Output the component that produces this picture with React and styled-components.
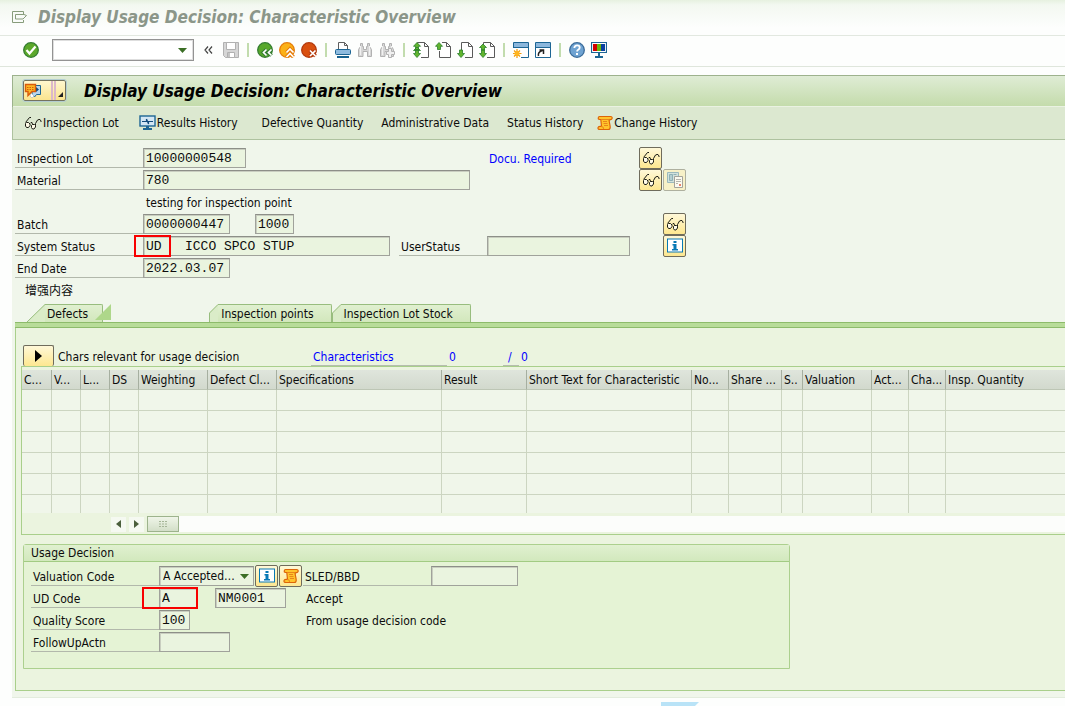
import React, { useState } from "react";
import styled, { createGlobalStyle, css } from "styled-components";

const GlobalStyle = createGlobalStyle`
  * {
    box-sizing: border-box;
  }

  body {
    margin: 0;
    background: #fdfefd;
    color: #0c0c0c;
    font-family: "DejaVu Sans Condensed", "DejaVu Sans", "Noto Sans CJK SC", sans-serif;
    font-size: 12px;
    line-height: 16px;
  }

  button, input, select {
    font: inherit;
    color: inherit;
    margin: 0;
    padding: 0;
    border: 0;
    border-radius: 0;
    background: none;
    outline: none;
  }

  svg {
    display: block;
    flex: none;
  }
`;

/* ---------- icons ---------- */

const Glasses = () => (
  <svg width="18" height="16" viewBox="0 0 18 16" fill="none" stroke="#1c1c14">
    <path d="M7 2.500H5.500L1.500 7.500" />
    <path d="M2.500 7.500h2l1.500 1.500v1.500l-1.500 2h-2l-1-1.500V8.500z" fill="#fffbe8" />
    <path d="M8.500 9.500h2l1 1v1.500l-1.500 2H8.500l-1-1.500v-2z" fill="#fffbe8" />
    <path d="M6 8.500l1-1h1l.5 2M11.500 10.500V8.500l2-3.500 1.500-.5h1l1 1.500v1" />
  </svg>
);

const Monitor = () => (
  <svg width="17" height="16" viewBox="0 0 17 16">
    <rect x="1" y="1" width="15" height="10" fill="#d3e6f4" stroke="#1d6594" strokeWidth="1.4" />
    <path d="M3 6.500h4.500V4M7.500 4l2 5V6.500H14" fill="none" stroke="#124b7c" strokeWidth="1.2" />
    <path d="M7 11h3v2h3v2H4v-2h3z" fill="#1d6594" />
  </svg>
);

const Scroll = () => (
  <svg width="16" height="16" viewBox="0 0 16 16">
    <path
      d="M2.5 1.5h11q2 0 1.6 2-.5 1.300-2 1l-1 1 1 5.500q.6 3.500-2 3.500H3q-2.400 0-2-1.800.3-1.400 2-1.400h1.500L3.800 4.500H2.500q-1.500-.3-1.300-1.500.2-1.500 1.300-1.500z"
      fill="#ffc42b"
      stroke="#dc6508"
      strokeWidth="1.2"
    />
    <path d="M4 4.500h8M6 6.500h4M6.500 8.500h4M7 10.500h4M4 11.500q3 0 2.500 2.500" fill="none" stroke="#e8861a" />
  </svg>
);

const Info = () => (
  <svg width="16" height="16" viewBox="0 0 16 16">
    <rect x=".5" y="1" width="15" height="13" fill="#fff" stroke="#0879b5" />
    <path d="M6.500 3h3v2h-3zM5.500 6h4v5h1.500v1.500H5V11h1.500V7.500h-1z" fill="#0879b5" />
  </svg>
);

const Documents = () => (
  <svg width="16" height="16" viewBox="0 0 16 16">
    <path d="M.5 .5h11v10H.5z" fill="#d2e2dc" stroke="#9bb9bd" />
    <path d="M2.500 2.500h3v6h-3zM6.500 2.500h3" fill="#b4cfd0" stroke="#8fb0b5" />
    <path d="M7.500 4.500h8v11h-8z" fill="#fbfaf0" stroke="#a3a39b" />
    <path d="M9 7.500h5M9 9.500h5M9 11.500h2" stroke="#b5b5ad" />
    <path d="M12 12h2v2h-2z" fill="#e8836b" />
  </svg>
);

const Speech = () => (
  <svg width="18" height="16" viewBox="0 0 18 16">
    <path d="M8.500 2.500h8v9h-4l-2 2.500-2.500-2.500z" fill="#b5d6ee" stroke="#1d6594" />
    <path d="M12 4l3 2.500L12 9z" fill="#124b7c" />
    <path d="M7 10l3 3-2 2-2-2z" fill="#fff" stroke="#a8b3ba" strokeWidth=".6" />
    <path d="M1.500 1.500h10v7H8l-4 4v-4H1.500z" fill="#fcb723" stroke="#d95b0b" strokeWidth="1.400" />
    <path d="M3 4.500h7M3 6.500h7" stroke="#d95b0b" strokeDasharray="1.500 1" />
  </svg>
);

const ExitTree = () => (
  <svg width="16" height="12" viewBox="0 0 16 12" fill="none" stroke="#879c7b">
    <path d="M11.500 3V.5H.5v11h11V9M3.500 3.500h8.500l2.500 1-3.500 3.500H3.500z" />
  </svg>
);

const Check = () => (
  <svg width="16" height="16" viewBox="0 0 16 16">
    <circle cx="8" cy="8" r="7.300" fill="#5ca82b" stroke="#347d31" strokeWidth="1.300" />
    <path d="M3.500 8l3 3.500 6-7" fill="none" stroke="#fff" strokeWidth="2.200" />
  </svg>
);

const Save = () => (
  <svg width="16" height="16" viewBox="0 0 16 16" stroke="#b1b1b1">
    <path d="M.5 .5h15v15H2.500l-2-2z" fill="#d6d6d6" />
    <path d="M3.500 .5h9v7h-9z" fill="#fff" />
    <path d="M4.500 10.500h7v5h-7z" fill="#fff" />
    <path d="M5 11h2v4H5z" fill="#c4c4c4" stroke="none" />
  </svg>
);

// round button with a small double chevron or a cross in the lower right corner
const Round = ({ fill, stroke, mark }) => (
  <svg width="17" height="16" viewBox="0 0 17 16" fill="none">
    <circle cx="8" cy="8" r="7.300" fill={fill} stroke={stroke} strokeWidth="1.300" />
    <path d={mark} stroke={stroke} strokeWidth="3.800" />
    <path d={mark} stroke="#fff" strokeWidth="1.700" />
  </svg>
);

const Printer = () => (
  <svg width="16" height="16" viewBox="0 0 16 16">
    <path d="M3.500 8V.5h6l3 3V8M9.500 .5v3h3" fill="#fff" stroke="#5e5e5e" />
    <rect x=".5" y="7.500" width="15" height="5" rx="1" fill="#8dbade" stroke="#1d6594" />
    <path d="M2 14h12v2H2z" fill="#17618f" />
  </svg>
);

const Binoculars = ({ plus }) => (
  <svg width="16" height="16" viewBox="0 0 16 16">
    <path
      d="M3.500 1.500h2v3h1v3h3v-3h1v-3h2v3l2 3v7h-4v-5H6v5H1.500v-7l2-3z"
      fill="#d7d7d7"
      stroke="#b2b2b2"
    />
    <path d="M3.500 4v9M12.500 4v9" stroke="#f1f1f1" />
    {plus && <path d="M9.500 6.500h3v3h3v3h-3v3h-3v-3h-2v-3h2z" fill="#f0f0f0" stroke="#b2b2b2" />}
  </svg>
);

// page sheet with green arrows that tell the scroll direction
const PageIcon = ({ arrows, right }) => (
  <svg width="16" height="16" viewBox="0 0 16 16">
    <path
      d={right ? "M4.500 9v6.500h11v-11l-4-4H7M11.500 .5v4h4" : "M4.500 8V.5h7l4 4v11H8M11.500 .5v4h4"}
      fill="#fff"
      stroke="#5a5a5a"
    />
    <path d={arrows} fill="#62b52e" stroke="#28802a" strokeWidth=".8" />
  </svg>
);

const upTop = "M4 .5l3.500 3.800H5.500V7.500h-3V4.300H.5z";
const upLow = "M4 5l3.500 3.500H.5z";
const downLow = "M4 15.500l3.500-4H5.500V8h-3v3.500H.5z";

const SessionIcon = ({ shortcut }) => (
  <svg width="16" height="16" viewBox="0 0 16 16">
    <path d="M.5 .5h15v15H.5z" fill="#fff" stroke="#1d6594" />
    <path d="M1 1h14v4H1z" fill="#8cb7dc" />
    <path d="M0 5.500h16" stroke="#1d6594" />
    {shortcut ? (
      <path d="M3.500 14q-1-4 4-5.500M4.500 8h4v4" fill="none" stroke="#222" strokeWidth="1.500" />
    ) : (
      <>
        <path d="M0 6h8v10H0z" fill="#fff" />
        <path d="M4 7v9M0 11.500h8.500M1 8.500l6 6M7 8.500l-6 6" stroke="#f29a0a" strokeWidth="1.200" />
        <circle cx="4" cy="11.500" r="2.500" fill="#ffb51f" />
      </>
    )}
  </svg>
);

const Help = () => (
  <svg width="16" height="16" viewBox="0 0 16 16">
    <circle cx="8" cy="8" r="7.300" fill="#6fa3d2" stroke="#3a6b99" strokeWidth="1.300" />
    <path d="M5.300 6q.2-2.700 2.800-2.700 2.600 0 2.600 2.200 0 1.400-1.500 2.200-1.100.6-1.100 1.800" fill="none" stroke="#fff" strokeWidth="1.800" />
    <path d="M7 11h2v2H7z" fill="#fff" />
  </svg>
);

const Layout = () => (
  <svg width="16" height="16" viewBox="0 0 16 16">
    <path d="M.5 .5h15v10H.5z" fill="#fff" stroke="#1d6594" strokeWidth="1.200" />
    <path d="M2 2h4v7H2z" fill="#d40000" />
    <path d="M6 2h4v7H6z" fill="#6cb80b" />
    <path d="M10 2h4v7h-4z" fill="#0a3fa0" />
    <path d="M7 11h2v3h3v2H4v-2h3z" fill="#1d6594" />
  </svg>
);

const Triangle = ({ d = "M0 0h9L4.500 5z", w = 9, h = 5, fill = "#3b6e25" }) => (
  <svg width={w} height={h} viewBox={`0 0 ${w} ${h}`}>
    <path d={d} fill={fill} />
  </svg>
);

/* ---------- page ---------- */

const Page = styled.div`
  height: 100vh;
  overflow: hidden;
`;

const TitleBar = styled.header`
  display: flex;
  align-items: center;
  gap: 10px;
  height: 36px;
  padding: 0 12px 2px;
  border-bottom: 1px solid #e2e8e0;
  background: linear-gradient(#e6f1e0, #f3f8f1 5px, #fdfefd 28px);
  color: #8b9689;
`;

const Title = styled.h1`
  margin: 0;
  font-size: 17px;
  line-height: 20px;
  font-weight: bold;
  font-style: italic;
  white-space: nowrap;
`;

const Toolbar = styled.nav`
  display: flex;
  align-items: center;
  gap: 6px;
  height: 31px;
  padding: 0 23px 2px;
  border-bottom: 1px solid #dfe6dc;
`;

const ToolButton = styled.button`
  display: flex;
  width: 16px;
  height: 16px;
`;

const Separator = styled.span`
  width: 2px;
  height: 14px;
  margin: 0 2px;
  background: #c2dcae;
`;

const CommandBox = styled.div`
  display: flex;
  align-items: center;
  width: 142px;
  height: 22px;
  margin-left: 7px;
  padding: 0 6px;
  border: 1px solid #939393;
  box-shadow: inset 0 0 0 1px #dedede;
  background: #fff;

  input {
    flex: 1;
    min-width: 0;
  }
`;

const Collapse = styled(ToolButton)`
  align-items: center;
  justify-content: center;
  width: 17px;
`;

const Window = styled.main`
  margin: 8px 0 0 12px;
  border: solid #e3ecdd;
  border-width: 0 0 1px;
  background: #f0f6eb;
`;

const WindowHeader = styled.div`
  display: flex;
  align-items: center;
  gap: 18px;
  height: 32px;
  padding: 0 10px 2px;
  border: solid #9db28d;
  border-width: 1px 0 0 1px;
  box-shadow: inset 0 -1px 0 #eaf2e2;
  background: linear-gradient(#dfecd5, #c3dbaa);
  color: #000;
`;

const ServiceButton = styled.button`
  display: flex;
  width: 43px;
  height: 21px;
  align-items: center;
  border: 1px solid #74735f;
  border-radius: 2px;
  outline: 1px solid #b3cdd0;
  background: linear-gradient(#fff7cf, #fbe48e);

  span {
    display: flex;
    align-items: flex-end;
    justify-content: flex-end;
    flex: 1;
    height: 19px;
    margin-left: 9px;
    padding: 0 2px 3px 0;
    border-left: 5px double #dcb8c9;
  }
`;

const AppToolbar = styled.div`
  display: flex;
  height: 33px;
  padding-left: 6px;
  border: solid #aec29f;
  border-width: 0 0 1px 1px;
  background: #dce8d0;
`;

const AppButton = styled.button`
  display: flex;
  align-items: center;
  gap: 1px;
  padding: ${(p) => (p.$icon ? "0 15px 0 5px" : "0 9px")};
  white-space: nowrap;
`;

/* ---------- form parts ---------- */

const Form = styled.section`
  padding: 7px 0 3px 3px;
`;

const Row = styled.div`
  display: flex;
  align-items: center;
  position: relative;
  height: 22px;
`;

const Fields = styled.div`
  display: flex;
  align-items: center;
  width: 624px;
`;

const Label = styled.label`
  width: ${(p) => p.$width}px;
  height: 20px;
  margin-left: ${(p) => p.$gap || 0}px;
  padding: 3px 0 0 2px;
  border-bottom: 1px solid #b2b8ab;
  white-space: nowrap;
`;

const sunken = css`
  height: 20px;
  border: 1px solid #a0a29b;
  border-top-color: #8d8f88;
  box-shadow: inset 1px 1px 0 #c9cec0;
  background: #eaf4df;
`;

const Field = styled.input`
  ${sunken}
  width: ${(p) => p.$width}px;
  margin-left: ${(p) => p.$gap || 0}px;
  padding: 0 2px;
  font-family: "Liberation Mono", monospace;
  font-size: 13px;
`;

const Text = styled.span`
  margin-left: ${(p) => p.$gap || 0}px;
  padding-top: 2px;
  color: ${(p) => (p.$blue ? "#0000ff" : "inherit")};
  white-space: nowrap;
`;

const Slots = styled.div`
  display: flex;
  justify-content: ${(p) => (p.$second ? "flex-end" : "flex-start")};
  gap: 1px;
  width: 47px;
`;

const IconButton = styled.button`
  display: flex;
  align-items: center;
  justify-content: center;
  width: ${(p) => p.$width || 23}px;
  height: 22px;
  border: 1px solid ${(p) => (p.disabled ? "#aeb09f" : "#6f6c5c")};
  border-radius: 2px;
  background: ${(p) => (p.disabled ? "#f7f1c8" : "linear-gradient(#fff8d8, #fde790)")};
`;

const RedFrame = styled.span`
  position: absolute;
  left: ${(p) => p.$left}px;
  top: 0;
  width: ${(p) => p.$width}px;
  height: 22px;
  border: 2px solid #f80000;
  pointer-events: none;
`;

/* ---------- tabs ---------- */

const Tabs = styled.div`
  display: flex;
  align-items: flex-end;
  height: 18px;
  padding-left: 15px;
`;

const TabButton = styled.button`
  display: flex;
  height: 18px;

  span {
    height: 18px;
    padding: ${(p) => (p.$first ? "2px 14px 0 2px" : "2px 17px 0 3px")};
    border-top: 1px solid #98bd7e;
    border-right: 1px solid #98bd7e;
    border-top-right-radius: 2px;
    background: linear-gradient(#e0f0d0, #d2e7bc);
    line-height: 15px;
    white-space: nowrap;
  }
`;

const TabEnd = styled.span`
  width: 114px;
  margin-left: -8px;
  height: 18px;
`;

const Tab = ({ first, children }) => (
  <TabButton role="tab" $first={first}>
    {first ? (
      <svg width="18" height="18">
        <path d="M0 18L18 0v18z" fill="#daecc8" />
        <path d="M0 18L18 .5" stroke="#98bd7e" />
      </svg>
    ) : (
      <svg width="9" height="18">
        <path d="M0 9l9-9v18H0z" fill="#daecc8" />
        <path d="M.5 18V9L9 .5" fill="none" stroke="#98bd7e" />
      </svg>
    )}
    <span>{children}</span>
  </TabButton>
);

const Panel = styled.section`
  margin: 0 0 6px 3px;
  padding-bottom: 21px;
  border-left: 1px solid #a9cf8b;
  border-bottom: 1px solid #a9cf8b;
  background: #ebf4df;

  &::before {
    content: "";
    display: block;
    height: 4px;
    margin-left: -1px;
    border: solid #8dbb6b;
    border-width: 1px 0;
    background: #b8dc99;
  }
`;

const Summary = styled.div`
  display: flex;
  align-items: flex-end;
  padding: 17px 0 0 7px;
`;

const Counter = styled.span`
  width: ${(p) => p.$width}px;
  height: 21px;
  margin-left: ${(p) => p.$gap || 0}px;
  padding: 4px 0 0 ${(p) => p.$pad || 2}px;
  border-bottom: 1px solid ${(p) => (p.$line ? "#b5bdae" : "transparent")};
  color: #0000ff;
`;

const ArrowButton = styled(IconButton)`
  height: 21px;
  border-bottom: 0;
`;

const SummaryText = styled(Counter)`
  color: inherit;
  white-space: nowrap;
`;

/* ---------- table ---------- */

const TableBox = styled.div`
  margin-left: 5px;
  border: solid #a9cf8b;
  border-width: 1px 0 1px 1px;
  padding: 3px 0 1px;
`;

const Table = styled.table`
  width: 100%;
  table-layout: fixed;
  border-collapse: separate;
  border-spacing: 0;
  background: #f0f6ea;

  th {
    height: 20px;
    padding: 0 0 0 2px;
    border-right: 1px solid #a6afa0;
    border-bottom: 1px solid #bdc6b5;
    background: linear-gradient(#dfe5dc, #d2d9cd);
    font-weight: normal;
    text-align: left;
    white-space: nowrap;
  }

  td {
    height: 21px;
    padding: 0;
    border-right: 1px solid #ccd5c1;
    border-bottom: 1px solid #ccd5c1;
  }

  tr:last-child td {
    height: 18px;
    border-bottom: 0;
  }

  th:last-child,
  td:last-child {
    border-right: 0;
  }
`;

const ScrollBar = styled.div`
  display: flex;
  align-items: center;
  height: 18px;
  margin-top: 2px;
  padding-left: 89px;
`;

const ScrollArrow = styled.button`
  display: flex;
  align-items: center;
  justify-content: center;
  width: 15px;
  height: 15px;
  margin-right: 3px;
  background: #f5f9f1;
`;

const Track = styled.div`
  display: flex;
  align-items: center;
  flex: 1;
  height: 16px;
  background: #fcfdfb;
`;

const Thumb = styled.button`
  display: flex;
  align-items: center;
  justify-content: center;
  width: 32px;
  height: 16px;
  border: 1px solid #9db38d;
  background: linear-gradient(#eff5e8, #d3dfc8);
`;

/* ---------- usage decision ---------- */

const Group = styled.section`
  width: 767px;
  max-width: 100%;
  margin: 9px 0 0 7px;
  padding-bottom: 15px;
  border: 1px solid #acd08e;
  border-radius: 3px 3px 0 0;
  background: #e5f3d5;
`;

const GroupTitle = styled.h2`
  height: 17px;
  margin: 0 0 3px;
  padding-left: 7px;
  border-bottom: 1px solid #a2cb83;
  background: linear-gradient(#e0f0d0, #d2e8bd);
  font-size: 12px;
  line-height: 16px;
  font-weight: normal;
`;

const GroupRows = styled.div`
  padding-left: 7px;
`;

const SelectBox = styled.div`
  ${sunken}
  display: flex;
  align-items: center;
  width: 95px;
  margin-right: 1px;
  padding: 0 4px 0 3px;

  select {
    flex: 1;
    min-width: 0;
    appearance: none;
  }
`;

const Footer = styled.footer`
  display: flex;
  padding: 4px 0 0 661px;
`;

const columns = [
  ["C...", 30],
  ["V...", 29],
  ["L...", 29],
  ["DS", 29],
  ["Weighting", 69],
  ["Defect Cl...", 69],
  ["Specifications", 165],
  ["Result", 85],
  ["Short Text for Characteristic", 165],
  ["No...", 37],
  ["Share ...", 53],
  ["S..", 21],
  ["Valuation", 69],
  ["Act...", 37],
  ["Cha...", 37],
  ["Insp. Quantity", null],
];

const LabeledField = ({ id, label, width, labelWidth = 128, gap, value = "" }) => (
  <>
    <Label htmlFor={id} $width={labelWidth} $gap={gap}>{label}</Label>
    <Field id={id} $width={width} value={value} readOnly />
  </>
);

const GlassesButton = ({ label }) => (
  <IconButton aria-label={label}><Glasses /></IconButton>
);

const App = () => {
  const [command, setCommand] = useState("");

  return (
    <Page>
      <GlobalStyle />
      <TitleBar>
        <ExitTree />
        <Title as="div">Display Usage Decision: Characteristic Overview</Title>
      </TitleBar>

      <Toolbar>
        <ToolButton aria-label="Enter"><Check /></ToolButton>
        <CommandBox>
          <input aria-label="Command" value={command} onChange={(e) => setCommand(e.target.value)} />
          <Triangle />
        </CommandBox>
        <Collapse aria-label="Collapse">
          <svg width="9" height="8" fill="none" stroke="#444" strokeWidth="1.2">
            <path d="M4 .5L1 4l3 3.500M8 .5L5 4l3 3.500" />
          </svg>
        </Collapse>
        <ToolButton aria-label="Save"><Save /></ToolButton>
        <Separator />
        <ToolButton aria-label="Back">
          <Round fill="#58a82c" stroke="#347d31" mark="M9.500 7.500l-3 3 3 3M14.500 7.500l-3 3 3 3" />
        </ToolButton>
        <ToolButton aria-label="Exit">
          <Round fill="#fbb117" stroke="#e57c0a" mark="M7.500 10.500l3.500-3.500 3.500 3.500M7.500 15l3.500-3.500 3.500 3.500" />
        </ToolButton>
        <ToolButton aria-label="Cancel">
          <Round fill="#d9500f" stroke="#b3390c" mark="M9 8.500l5.500 5.500M14.500 8.500L9 14" />
        </ToolButton>
        <Separator />
        <ToolButton aria-label="Print"><Printer /></ToolButton>
        <ToolButton aria-label="Find"><Binoculars /></ToolButton>
        <ToolButton aria-label="Find next"><Binoculars plus /></ToolButton>
        <Separator />
        <ToolButton aria-label="First page"><PageIcon arrows={upTop + upLow + downLow} /></ToolButton>
        <ToolButton aria-label="Previous page"><PageIcon right arrows={upTop} /></ToolButton>
        <ToolButton aria-label="Next page"><PageIcon arrows={downLow} /></ToolButton>
        <ToolButton aria-label="Last page"><PageIcon arrows={"M4 2l3.500 3.500H5.500V8h-3V5.500H.5z" + downLow} /></ToolButton>
        <Separator />
        <ToolButton aria-label="New session"><SessionIcon /></ToolButton>
        <ToolButton aria-label="Create shortcut"><SessionIcon shortcut /></ToolButton>
        <Separator />
        <ToolButton aria-label="Help"><Help /></ToolButton>
        <ToolButton aria-label="Customize layout"><Layout /></ToolButton>
      </Toolbar>

      <Window>
        <WindowHeader>
          <ServiceButton aria-label="Services for object">
            <Speech />
            <span><Triangle w={5} h={5} d="M5 0v5H0z" fill="#222" /></span>
          </ServiceButton>
          <Title>Display Usage Decision: Characteristic Overview</Title>
        </WindowHeader>
        <AppToolbar>
          <AppButton $icon><Glasses />Inspection Lot</AppButton>
          <AppButton $icon><Monitor />Results History</AppButton>
          <AppButton>Defective Quantity</AppButton>
          <AppButton>Administrative Data</AppButton>
          <AppButton>Status History</AppButton>
          <AppButton $icon><Scroll />Change History</AppButton>
        </AppToolbar>

        <Form>
          <Row>
            <Fields>
              <LabeledField id="lot" label="Inspection Lot" width={103} value="10000000548" />
              <Text $blue $gap={243}>Docu. Required</Text>
            </Fields>
            <Slots><GlassesButton label="Display lot" /></Slots>
          </Row>
          <Row>
            <Fields>
              <LabeledField id="material" label="Material" width={327} value="780" />
            </Fields>
            <Slots>
              <GlassesButton label="Display material" />
              <IconButton aria-label="Documents" disabled><Documents /></IconButton>
            </Slots>
          </Row>
          <Row>
            <Text $gap={131}>testing for inspection point</Text>
          </Row>
          <Row>
            <Fields>
              <LabeledField id="batch" label="Batch" width={87} value="0000000447" />
              <Field aria-label="Plant" $width={39} $gap={25} value="1000" readOnly />
            </Fields>
            <Slots $second><GlassesButton label="Display batch" /></Slots>
          </Row>
          <Row>
            <Fields>
              <LabeledField id="status" label="System Status" width={247} value="UD   ICCO SPCO STUP" />
              <LabeledField id="userstatus" label="UserStatus" labelWidth={88} gap={9} width={143} />
            </Fields>
            <Slots $second><IconButton aria-label="Status info"><Info /></IconButton></Slots>
            <RedFrame $left={119} $width={37} />
          </Row>
          <Row>
            <LabeledField id="enddate" label="End Date" width={87} value="2022.03.07" />
          </Row>
          <Row>
            <Text $gap={10}>增强内容</Text>
          </Row>
        </Form>

        <Tabs role="tablist">
          <Tab first>Defects</Tab>
          <TabEnd>
            <Triangle w={16} h={16} d="M16 0v16H0z" fill="#aed78a" />
          </TabEnd>
          <Tab>Inspection points</Tab>
          <Tab>Inspection Lot Stock</Tab>
        </Tabs>

        <Panel>
          <Summary>
            <ArrowButton $width={31} aria-label="Select view">
              <Triangle w={7} h={12} d="M0 0l7 6-7 6z" fill="#000" />
            </ArrowButton>
            <SummaryText $width={255} $gap={2}>Chars relevant for usage decision</SummaryText>
            <Counter $width={136} $line>Characteristics</Counter>
            <Counter $width={56}>0</Counter>
            <Counter $width={16} $pad={5} $line>/</Counter>
            <Counter $width={20}>0</Counter>
          </Summary>

          <TableBox>
            <Table>
              <colgroup>
                {columns.map(([name, width]) => (
                  <col key={name} width={width || undefined} />
                ))}
              </colgroup>
              <thead>
                <tr>
                  {columns.map(([name]) => <th key={name}>{name}</th>)}
                </tr>
              </thead>
              <tbody>
                {[1, 2, 3, 4, 5, 6].map((row) => (
                  <tr key={row}>
                    {columns.map(([name]) => <td key={name} />)}
                  </tr>
                ))}
              </tbody>
            </Table>
            <ScrollBar>
              <ScrollArrow aria-label="Scroll left">
                <Triangle w={5} h={8} d="M5 0v8L0 4z" fill="#4b5f3c" />
              </ScrollArrow>
              <ScrollArrow aria-label="Scroll right">
                <Triangle w={5} h={8} d="M0 0l5 4-5 4z" fill="#4b5f3c" />
              </ScrollArrow>
              <Track>
                <Thumb aria-label="Scroll position">
                  <svg width="8" height="6" stroke="#a5b597" strokeDasharray="2 1">
                    <path d="M0 .5h8M0 3h8M0 5.500h8" />
                  </svg>
                </Thumb>
              </Track>
            </ScrollBar>
          </TableBox>

          <Group>
            <GroupTitle>Usage Decision</GroupTitle>
            <GroupRows>
              <Row>
                <Label htmlFor="valuation" $width={128}>Valuation Code</Label>
                <SelectBox>
                  <select id="valuation" defaultValue="A">
                    <option value="A">A Accepted…</option>
                  </select>
                  <Triangle />
                </SelectBox>
                <Slots>
                  <IconButton aria-label="Code info"><Info /></IconButton>
                  <IconButton aria-label="Long text"><Scroll /></IconButton>
                </Slots>
                <LabeledField id="sled" label="SLED/BBD" labelWidth={128} gap={1} width={87} />
              </Row>
              <Row>
                <LabeledField id="udcode" label="UD Code" width={38} value="A" />
                <Field aria-label="Code group" $width={71} $gap={18} value="NM0001" readOnly />
                <Text $gap={20}>Accept</Text>
                <RedFrame $left={111} $width={56} />
              </Row>
              <Row>
                <LabeledField id="score" label="Quality Score" width={31} value="100" />
                <Text $gap={116}>From usage decision code</Text>
              </Row>
              <Row>
                <LabeledField id="followup" label="FollowUpActn" width={71} />
              </Row>
            </GroupRows>
          </Group>
        </Panel>
      </Window>

      <Footer>
        <svg width="38" height="18" viewBox="0 0 38 18">
          <path d="M0 0h38L20 18H0z" fill="#b9e3f7" />
          <text x="1" y="14" fill="#fff" fontFamily="Liberation Sans" fontSize="14" fontWeight="bold">SAP</text>
        </svg>
      </Footer>
    </Page>
  );
};

export default App;
